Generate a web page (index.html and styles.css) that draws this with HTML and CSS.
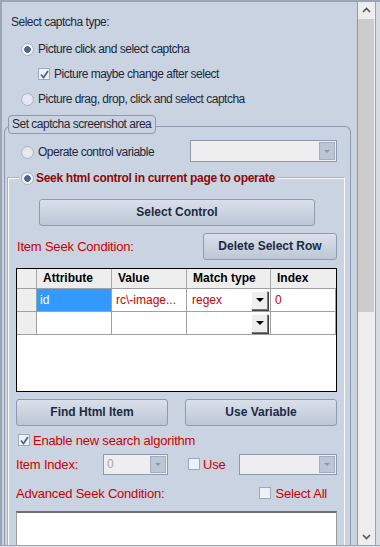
FILE: index.html
```html
<!DOCTYPE html>
<html lang="en">
<head>
    <meta charset="UTF-8">
    <title>Captcha Settings</title>
    <link rel="stylesheet" href="styles.css">
</head>
<body>

    <div class="frame">
        <div class="panel">
            <div class="row heading">Select captcha type:</div>
            <div class="row opt opt-first"><span class="radio on"></span>Picture click and select captcha</div>
            <div class="row opt opt-sub">
                <span class="check on"><svg width="9" height="9" viewBox="0 0 9 9"><path d="M1 4.5 L3.5 7.5 L8 1" fill="none" stroke="#4a6690" stroke-width="1.8"/></svg></span>
                Picture maybe change after select
            </div>
            <div class="row opt"><span class="radio"></span>Picture drag, drop, click and select captcha</div>

            <!-- Set captcha screenshot area -->
            <div class="group">
                <div class="group-title">Set captcha screenshot area</div>

                <div class="var-row">
                    <div class="opt"><span class="radio"></span>Operate control variable</div>
                    <div class="combo combo-var"><span class="combo-btn"><i class="tri"></i></span></div>
                </div>

                <div class="seek">
                    <div class="seek-title"><span class="radio on"></span>Seek html control in current page to operate</div>

                    <div class="btn btn-select">Select Control</div>

                    <div class="cond-row">
                        <span class="label">Item Seek Condition:</span>
                        <div class="btn btn-delete">Delete Select Row</div>
                    </div>

                    <!-- condition table -->
                    <div class="table">
                        <div class="grid">
                            <div class="th th-corner"></div>
                            <div class="th">Attribute</div>
                            <div class="th">Value</div>
                            <div class="th">Match type</div>
                            <div class="th th-last">Index</div>

                            <div class="rh"></div>
                            <div class="td selected">id</div>
                            <div class="td red">rc\-image...</div>
                            <div class="td red td-match">regex<span class="cell-btn"><i></i></span></div>
                            <div class="td red">0</div>

                            <div class="rh"></div>
                            <div class="td"></div>
                            <div class="td"></div>
                            <div class="td td-match"><span class="cell-btn"><i></i></span></div>
                            <div class="td"></div>
                        </div>
                    </div>

                    <div class="btn-row">
                        <div class="btn btn-half">Find Html Item</div>
                        <div class="btn btn-half">Use Variable</div>
                    </div>

                    <div class="enable-row">
                        <span class="check on"><svg width="9" height="9" viewBox="0 0 9 9"><path d="M1 4.5 L3.5 7.5 L8 1" fill="none" stroke="#4a6690" stroke-width="1.8"/></svg></span>
                        <span class="label">Enable new search algorithm</span>
                    </div>

                    <div class="index-row">
                        <span class="label idx-label">Item Index:</span>
                        <div class="combo combo-idx"><span class="combo-val">0</span><span class="combo-btn"><i class="tri"></i></span></div>
                        <span class="check use-check"></span>
                        <span class="label use-label">Use</span>
                        <div class="combo combo-use"><span class="combo-btn"><i class="tri"></i></span></div>
                    </div>

                    <div class="adv-row">
                        <span class="label">Advanced Seek Condition:</span>
                        <div class="select-all"><span class="check"></span><span class="label">Select All</span></div>
                    </div>

                    <div class="textarea"></div>
                </div>
            </div>
        </div>

        <div class="scrollbar">
            <div class="sb-btn"><svg width="17" height="17" viewBox="0 0 17 17"><path d="M5 10 L8.5 6.5 L12 10" fill="none" stroke="#555" stroke-width="1.6"/></svg></div>
            <div class="sb-thumb"></div>
            <div class="sb-track"></div>
            <div class="sb-btn"><svg width="17" height="17" viewBox="0 0 17 17"><path d="M5 7 L8.5 10.5 L12 7" fill="none" stroke="#555" stroke-width="1.6"/></svg></div>
        </div>
        <div class="edge"></div>
    </div>

</body>
</html>
```

FILE: styles.css
```css
/* Page and outer frame */
body {
    margin: 0;
    background-color: #dfe4eb;
    font-family: "Liberation Sans", Arial, sans-serif;
    font-size: 12px;
}

.frame {
    display: flex;
    width: 380px;
    height: 543px;
    border-top: 2px solid #9ba4b1;
    border-bottom: 1px solid #9ba4b1;
    overflow: hidden;
}

.panel {
    width: 355px;
    padding-left: 2px;
    border-left: 2px solid #9ba4b1;
    border-right: 1px solid #8e99ab;
    background-color: #c9d3e2;
    overflow: hidden;
    color: #1f2836;
}

/* Plain rows at the top */
.row {
    display: flex;
    align-items: center;
    height: 20px;
    letter-spacing: -0.5px;
}

.heading {
    margin: 10px 0 0 7px;
}

.opt {
    display: flex;
    align-items: center;
    margin: 5px 0 0 17px;
    letter-spacing: -0.5px;
}

.opt-first {
    margin-top: 7px;
}

.opt-sub {
    margin-left: 34px;
}

.opt .radio {
    margin-right: 4px;
}

.opt-sub .check {
    margin-right: 4px;
}

/* Radio and check boxes */
.radio {
    display: inline-block;
    box-sizing: border-box;
    width: 13px;
    height: 13px;
    border: 1px solid #a8b3c4;
    border-radius: 50%;
    background: radial-gradient(circle, #e9edf3 0, #dde3eb 100%);
    flex: none;
}

.radio.on {
    background: radial-gradient(circle, #4a6690 0 3px, #eef1f5 3.6px);
}

.check {
    display: inline-flex;
    align-items: center;
    justify-content: center;
    box-sizing: border-box;
    width: 12px;
    height: 12px;
    border: 1px solid #9ea9ba;
    background-color: #eef1f5;
    flex: none;
}

/* Titled group boxes */
.group {
    margin: 17px 6px 0 0;
    border: 1px solid #8d99ac;
    border-bottom: none;
    border-radius: 6px 6px 0 0;
    height: 600px;
}

.group-title {
    width: max-content;
    margin: -12px 0 0 3px;
    padding: 0 4px 0 3px;
    height: 17px;
    line-height: 17px;
    border: 1px solid #8d99ac;
    border-radius: 4px;
    background-color: #c9d3e2;
    letter-spacing: -0.5px;
}

.var-row {
    display: flex;
    align-items: center;
    height: 22px;
    margin-top: 6px;
}

.var-row .opt {
    margin: 2px 0 0 16px;
}

.combo {
    display: flex;
    align-items: center;
    justify-content: space-between;
    box-sizing: border-box;
    height: 22px;
    border: 1px solid #8d99ac;
    background-color: #eeeeee;
    padding: 1px;
}

.combo-var {
    width: 147px;
    margin-left: auto;
    margin-right: 13px;
}

.combo-btn {
    display: flex;
    align-items: center;
    justify-content: center;
    box-sizing: border-box;
    width: 16px;
    height: 100%;
    margin-left: auto;
    background-color: #bcc6d4;
    border: 1px solid #a2adbe;
}

.tri {
    width: 0;
    height: 0;
    border-left: 3px solid transparent;
    border-right: 3px solid transparent;
    border-top: 3px solid #8e98a7;
}

.seek {
    margin: 16px 5px 0 3px;
    padding: 0 7px;
    border: 1px solid #fbfcfd;
    box-shadow: -1px -1px 0 #a9b3c1;
    height: 600px;
}

.seek-title {
    display: flex;
    align-items: center;
    width: max-content;
    height: 16px;
    margin: -9px 0 0 3px;
    padding: 0 3px 0 2px;
    background-color: #c9d3e2;
    color: #8b0a0a;
    font-weight: bold;
    letter-spacing: -0.3px;
}

.seek-title .radio {
    margin-right: 2px;
}

/* Buttons */
.btn {
    box-sizing: border-box;
    height: 27px;
    line-height: 25px;
    text-align: center;
    border: 1px solid #8e9aae;
    border-radius: 3px;
    background: linear-gradient(#d9e0ea, #bdc7d5);
    color: #1d2a44;
    font-weight: bold;
}

.btn-select {
    margin: 13px 22px 0 23px;
}

.cond-row {
    display: flex;
    align-items: center;
    justify-content: space-between;
    margin-top: 7px;
}

.label {
    color: #cc0000;
    font-size: 13px;
    letter-spacing: -0.2px;
}

.cond-row .label {
    margin-left: 1px;
}

.btn-delete {
    width: 134px;
}

/* Condition table */
.table {
    margin-top: 8px;
    height: 122px;
    border: 1px solid #000;
    background-color: #fff;
}

.grid {
    display: grid;
    grid-template-columns: 20px 75px 75px 84px 65px;
    grid-template-rows: 20px 23px 23px;
}

.th {
    box-sizing: border-box;
    padding-left: 6px;
    line-height: 19px;
    background-color: #eeeeee;
    border-bottom: 1px solid #a0a0a0;
    border-right: 1px solid #a8a8a8;
    font-weight: bold;
    color: #000;
}

.th-last {
    border-right: none;
}

.rh {
    background-color: #eeeeee;
    border-right: 1px solid #a0a0a0;
    border-bottom: 1px solid #a0a0a0;
}

.td {
    display: flex;
    align-items: center;
    box-sizing: border-box;
    padding-left: 4px;
    border-right: 1px solid #a0a0a0;
    border-bottom: 1px solid #a0a0a0;
    color: #000;
}

.td.red {
    color: #cc0000;
}

.td.selected {
    padding-left: 3px;
    background-color: #3399ff;
    color: #fff;
}

.td-match {
    padding-left: 5px;
}

.cell-btn {
    display: flex;
    align-items: center;
    justify-content: center;
    box-sizing: border-box;
    width: 17px;
    height: 19px;
    margin: 0 2px 0 auto;
    background-color: #eeeeee;
    border: 1px solid;
    border-color: #fff #7a7a7a #7a7a7a #fff;
    box-shadow: 1px 1px 0 #404040;
}

.cell-btn i {
    width: 0;
    height: 0;
    border-left: 4px solid transparent;
    border-right: 4px solid transparent;
    border-top: 4px solid #000;
}

.btn-row {
    display: flex;
    justify-content: space-between;
    margin-top: 7px;
}

.btn-half {
    width: 152px;
}

.enable-row {
    display: flex;
    align-items: center;
    height: 16px;
    margin: 6px 0 0 2px;
}

.enable-row .check {
    margin-right: 3px;
}

.index-row {
    display: flex;
    align-items: center;
    height: 24px;
    margin-top: 4px;
}

.idx-label {
    width: 87px;
}

.combo-idx {
    width: 65px;
    height: 21px;
}

.combo-val {
    padding-left: 2px;
    color: #a8a8a8;
}

.use-check {
    margin-left: 20px;
}

.use-label {
    margin-left: 3px;
}

.combo-use {
    width: 98px;
    height: 21px;
    margin-left: auto;
}

.adv-row {
    display: flex;
    align-items: center;
    justify-content: space-between;
    height: 16px;
    margin-top: 9px;
}

.select-all {
    display: flex;
    align-items: center;
    margin-right: 10px;
}

.select-all .check {
    margin-right: 5px;
}

.textarea {
    margin-top: 10px;
    height: 60px;
    border: 1px solid #9a9a9a;
    border-top: 2px solid #6f6f6f;
    background-color: #fff;
}

/* Scrollbar on the right */
.scrollbar {
    display: flex;
    flex-direction: column;
    width: 17px;
    border-right: 1px solid #9ba4b1;
    background-color: #eeeeee;
}

.sb-btn {
    height: 17px;
    flex: none;
}

.sb-thumb {
    height: 293px;
    margin: 0 1px 0 0;
    background-color: #cccccc;
}

.sb-track {
    flex: 1;
}

.edge {
    width: 4px;
    background-color: #d6dce5;
}
```
